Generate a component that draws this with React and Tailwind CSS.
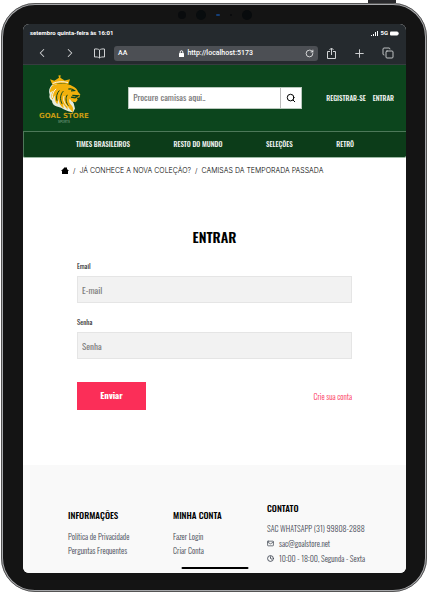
import { ChevronLeft, ChevronRight, RotateCw, Plus, Copy, Search, Mail, Clock } from "lucide-react";

function Camera() {
  return (
    <div className="flex h-[18px] items-center justify-center" aria-hidden="true">
      <div className="flex w-[74px] items-center justify-between">
        <i className="size-2 rounded-full bg-[#090b0d]" />
        <i className="size-[10px] rounded-full bg-[#080c0e]" />
        <i className="h-[2px] w-1 rounded-full bg-[#153f78]" />
        <i className="size-[2px] rounded-full bg-[#07090b]" />
        <i className="size-[10px] rounded-full bg-[#080b0d]" />
      </div>
    </div>
  );
}

function Logo() {
  return (
    <a href="#" aria-label="Goal Store" className="flex w-[52px] flex-col items-center pt-[2px]">
      <svg viewBox="48 22 108 116" className="h-[39px] w-[36px]">
        <path d="M66 54C58 62 55 72 59 84c-3 8 1 14 7 18 0 9 6 15 15 17l12 4 8 4 14 6 14 4 6-12-4-16-20-30-30-28z" fill="#e6ebdc" />
        <path d="M68 56c20-9 44-8 60 2 8 3 14 9 16 17l7 8-3 9-8 1 3 6-6 7-12-2-6-8c-4 8 0 15 6 20 5 6 6 13 3 21-5-9-13-13-16-22l1 14-14-18 2 14C91 118 86 108 86 96l-4 16C74 105 73 94 76 84l-9 14c-5-9-3-19 4-27l-11 6c-1-9 2-15 8-21z" fill="#f2b10c" />
        <path d="M60 37l13 5 14-9-2-7 7-1-1 8 13 8 16-4-5 15c-16-5-32-4-47 3z" fill="#f2b10c" />
        <path d="M88 71c-8 8-10 20-7 31M100 73c-9 9-11 24-4 38M112 84c-6 9-5 22 3 33" stroke="#0c451d" strokeWidth="3" fill="none" />
        <path d="M115 67c6-2 12-1 18 4l-10 1M127 86l17 1-9 6-12-2" stroke="#0c451d" strokeWidth="4" fill="none" />
        <path d="M78 66c-8 8-12 17-10 27M102 88c-3 10 0 20 9 29M68 50c15-6 30-7 46-3" stroke="#f7f7ef" strokeWidth="3" fill="none" />
      </svg>
      <span className="font-['DejaVu_Sans',sans-serif] text-[7px] leading-[7px] font-bold whitespace-nowrap text-[#c79b12]">GOAL STORE</span>
      <span className="font-['Inter',sans-serif] text-[3px] leading-[4px] text-[#8fae98]">SPORTS</span>
    </a>
  );
}

function BrowserChrome() {
  return (
    <div className="border-b border-[#373c40] bg-[#252a2e] font-['Roboto',sans-serif] text-white">
      <div className="flex h-[18px] items-center justify-between px-[7px] text-[6px] leading-[10px] font-bold">
        <span>setembro quinta-feira às 16:01</span>
        <span className="flex items-center gap-[2px]">
          <svg viewBox="0 0 7 5" className="h-[5px] w-[7px]" fill="currentColor">
            <path d="M0 4h1v1H0zM2 3h1v2H2zM4 1h1v4H4zM6 0h1v5H6z" />
          </svg>
          5G
          <svg viewBox="0 0 9 5" className="h-[5px] w-[9px]" fill="currentColor">
            <rect width="8" height="4" y=".5" rx="1" />
            <rect x="8.3" y="1.5" width=".7" height="2" />
          </svg>
        </span>
      </div>
      <div className="flex h-[22px] items-center px-[12px] text-[#d0d2d4]">
        <button aria-label="Voltar"><ChevronLeft size={14} strokeWidth={1.8} /></button>
        <button aria-label="Avançar" className="ml-[14px]"><ChevronRight size={14} strokeWidth={1.8} /></button>
        <button aria-label="Favoritos" className="ml-[16px]">
          <svg viewBox="0 0 13 11" className="h-[11px] w-[13px]" fill="none" stroke="currentColor">
            <path d="M6.5 2C5.500 1 3.500 .8 1.500 1v8c2-.2 4 0 5 1 1-1 3-1.200 5-1V1c-2-.2-4 0-5 1zM6.500 2v8" />
          </svg>
        </button>
        <div className="ml-[8px] flex h-[15px] min-w-0 flex-1 items-center justify-between rounded-[3px] bg-[#4c4f54] px-[4px] text-[7px] leading-[10px] font-medium text-white">
          <span>AA</span>
          <span className="flex items-center gap-[3px]">
            <svg viewBox="0 0 5 7" className="h-[7px] w-[5px]">
              <path d="M1.200 3V2a1.300 1.300 0 012.600 0v1" fill="none" stroke="currentColor" strokeWidth=".9" />
              <rect y="3" width="5" height="4" rx=".6" fill="currentColor" />
            </svg>
            http://localhost:5173
          </span>
          <button aria-label="Recarregar"><RotateCw size={9} strokeWidth={2} /></button>
        </div>
        <button aria-label="Compartilhar" className="ml-[8px]">
          <svg viewBox="0 0 11 13" className="h-[13px] w-[11px]" fill="none" stroke="currentColor">
            <path d="M4 4.500H1.500v7h8v-7H7M5.500 8V1.200M3.500 3l2-2 2 2" />
          </svg>
        </button>
        <button aria-label="Nova aba" className="ml-[16px]"><Plus size={13} strokeWidth={1.8} /></button>
        <button aria-label="Abas" className="ml-[16px]"><Copy size={12} strokeWidth={1.8} /></button>
      </div>
    </div>
  );
}

function StoreHeader() {
  return (
    <header className="text-[#f3f6f3]">
      <div className="flex h-[66px] items-center justify-between bg-[#0c451d] pr-[12px] pl-[15px]">
        <Logo />
        <form className="ml-[14px] flex h-[22px] w-[174px] border border-[#b9c8bd] bg-white text-black">
          <input aria-label="Procure camisas" placeholder="Procure camisas aqui.." className="min-w-0 flex-1 px-[4px] text-[9px] outline-none placeholder:text-[#777]" />
          <button type="button" aria-label="Buscar" className="flex w-[21px] items-center justify-center border-l border-[#bbb]"><Search size={10} strokeWidth={2.4} /></button>
        </form>
        <div className="flex gap-[7px] text-[7px] leading-[12px] font-medium whitespace-nowrap">
          <a href="#">REGISTRAR-SE</a>
          <a href="#">ENTRAR</a>
        </div>
      </div>
      <nav className="flex h-[27px] items-center justify-between rounded-b-[2px] border-t border-b border-l border-[#4d7859] border-b-[#9db9a4] bg-[#0c3c19] px-[52px] pb-[2px] text-[7px] leading-[12px] font-medium whitespace-nowrap">
        <a href="#">TIMES BRASILEIROS</a>
        <a href="#">RESTO DO MUNDO</a>
        <a href="#">SELEÇÕES</a>
        <a href="#">RETRÔ</a>
      </nav>
    </header>
  );
}

function Field({ id, label, type, placeholder }) {
  return (
    <div className="flex flex-col gap-[4px]">
      <label htmlFor={id} className="text-[7px] leading-[12px] text-[#333]">{label}</label>
      <input id={id} type={type} placeholder={placeholder} className="h-[27px] w-full border border-[#e5e5e5] bg-[#f2f2f2] px-[4px] text-[9px] outline-none placeholder:text-[#808080]" />
    </div>
  );
}

function LoginForm() {
  return (
    <form className="px-[54px] pt-[42px] pb-[55px]">
      <h1 className="text-center text-[14px] leading-[24px] font-semibold text-black">ENTRAR</h1>
      <div className="mt-[11px] flex flex-col gap-[13px]">
        <Field id="email" label="Email" type="email" placeholder="E-mail" />
        <Field id="senha" label="Senha" type="password" placeholder="Senha" />
      </div>
      <div className="mt-[23px] flex items-center justify-between">
        <button type="button" className="h-[28px] w-[69px] bg-[#fb2e58] text-[9px] font-bold text-white">Enviar</button>
        <a href="#" className="text-[8px] leading-[12px] font-light text-[#fb2e58]">Crie sua conta</a>
      </div>
    </form>
  );
}

function Footer() {
  return (
    <footer className="grid grid-cols-[105fr_94fr_139fr] items-center bg-[#f9f9f9] pt-[36px] pb-[7px] pl-[45px] text-[8px] leading-[14px] font-light whitespace-nowrap text-[#3f4652]">
      <section className="pb-[2px]">
        <h2 className="mb-[7px] text-[9px] font-medium text-black">INFORMAÇÕES</h2>
        <a href="#" className="block">Política de Privacidade</a>
        <a href="#" className="block">Perguntas Frequentes</a>
      </section>
      <section className="pb-[2px]">
        <h2 className="mb-[7px] text-[9px] font-medium text-black">MINHA CONTA</h2>
        <a href="#" className="block">Fazer Login</a>
        <a href="#" className="block">Criar Conta</a>
      </section>
      <section className="leading-[15px]">
        <h2 className="mb-[6px] text-[9px] leading-[14px] font-medium text-black">CONTATO</h2>
        <p>SAC WHATSAPP (31) 99808-2888</p>
        <p className="flex items-center gap-[5px]"><Mail size={7} strokeWidth={2.5} />sac@goalstore.net</p>
        <p className="flex items-center gap-[5px]"><Clock size={7} strokeWidth={3} />10:00 - 18:00, Segunda - Sexta</p>
      </section>
    </footer>
  );
}

export default function App() {
  return (
    <div className="relative min-h-screen bg-white px-px pt-[3px] font-['Oswald','Liberation_Sans_Narrow','Liberation_Sans',sans-serif]">
      <i className="absolute top-0 right-[32px] h-[3px] w-[28px] bg-[#29292c]" />
      <div className="relative rounded-[34px] border-2 border-[#a7a8ab] bg-[#141414] pt-px pr-[19px] pb-[17px] pl-[20px] outline-1 -outline-offset-1 outline-[#555]">
        <Camera />
        <div className="relative overflow-hidden rounded-[6px] bg-white">
          <BrowserChrome />
          <StoreHeader />
          <nav aria-label="Destaques" className="flex h-[25px] items-center gap-[4px] pl-[38px] font-['Inter','Liberation_Sans',sans-serif] text-[7px] leading-[12px] font-light whitespace-nowrap text-black">
            <a href="#" aria-label="Início">
              <svg viewBox="0 0 8 8" className="size-2"><path d="M4 0l1 1V.5h1V2l2 2H7v3H1V4H0z" /></svg>
            </a>
            <span>/</span>
            <a href="#">JÁ CONHECE A NOVA COLEÇÃO?</a>
            <span>/</span>
            <a href="#">CAMISAS DA TEMPORADA PASSADA</a>
          </nav>
          <LoginForm />
          <Footer />
          <i className="absolute bottom-[4px] left-1/2 h-[2px] w-[67px] -translate-x-1/2 rounded-full bg-black" />
        </div>
      </div>
    </div>
  );
}
